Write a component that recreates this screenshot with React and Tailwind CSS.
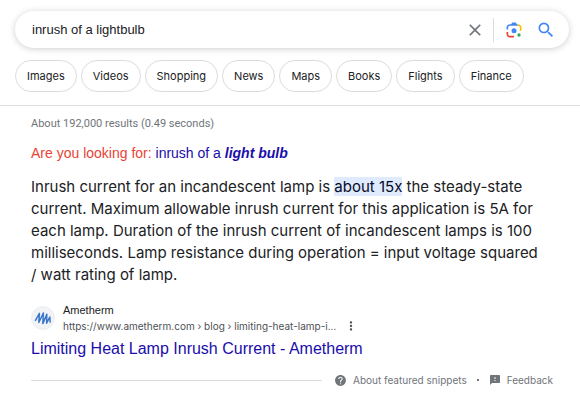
import { useState } from "react";
import { MdClose, MdSearch, MdMoreVert, MdHelp, MdFeedback } from "react-icons/md";

const filters = [
  "Images",
  "Videos",
  "Shopping",
  "News",
  "Maps",
  "Books",
  "Flights",
  "Finance",
];

function LensIcon() {
  return (
    <svg viewBox="0 0 192 192" className="size-5" aria-hidden="true">
      <circle fill="#34a853" cx="144.07" cy="144" r="16" />
      <circle fill="#4285f4" cx="96.07" cy="104" r="24" />
      <path fill="#ea4335" d="M24,135.2c0,18.11,14.69,32.8,32.8,32.8H96v-16l-40.1-0.1c-8.8,0-15.9-8.19-15.9-17.9v-18H24V135.2z" />
      <path fill="#fbbc04" d="M168,72.8c0-18.11-14.69-32.8-32.8-32.8H116l20,16c8.8,0,16,8.29,16,18v30h16V72.8z" />
      <path fill="#4285f4" d="M112,24l-32,0L68,40H56.8C38.69,40,24,54.69,24,72.8V92h16V74c0-9.71,7.2-18,16-18h80L124,40L112,24z" />
    </svg>
  );
}

function AmethermLogo() {
  return (
    <svg viewBox="0 0 24 24" className="size-6 shrink-0" aria-hidden="true">
      <circle cx="12" cy="12" r="11.5" fill="#f1f3f4" stroke="#e4e7ea" strokeWidth="0.6" />
      <path
        d="M4.2 14.8 8.4 7.4 7.8 16.4 12.4 7 11.8 17.6 15.8 8.2 15.6 17.2 18.8 11 19.2 16.6"
        fill="none"
        stroke="#3a76cc"
        strokeWidth="1.5"
        strokeLinejoin="round"
      />
    </svg>
  );
}

export default function App() {
  const [query, setQuery] = useState("inrush of a lightbulb");

  return (
    <div className="min-h-screen bg-white font-['Inter',sans-serif] text-[#202124]">
      {/* Search bar */}
      <header className="border-b border-[#dadce0] pt-[11px] pb-[13px]">
        <form
          onSubmit={(e) => e.preventDefault()}
          className="ml-[15px] mr-[11px] flex h-[37px] items-center rounded-full bg-white pl-[17px] pr-[13px] shadow-[0_1px_6px_rgba(32,33,36,0.22)]"
        >
          <input
            type="text"
            aria-label="Search"
            value={query}
            onChange={(e) => setQuery(e.target.value)}
            className="min-w-0 flex-1 bg-transparent font-['Liberation_Sans',sans-serif] text-[13px] outline-none"
          />
          <button type="button" aria-label="Clear" onClick={() => setQuery("")} className="text-[#70757a]">
            <MdClose className="size-5" />
          </button>
          <span className="ml-2 h-6 w-px bg-[#dadce0]" />
          <button type="button" aria-label="Search by image" className="ml-[10px]">
            <LensIcon />
          </button>
          <button type="submit" aria-label="Submit search" className="ml-3 text-[#4285f4]">
            <MdSearch className="size-5" />
          </button>
        </form>

        {/* Filters */}
        <nav className="mt-3 ml-[15px] flex gap-1">
          {filters.map((name) => (
            <a
              key={name}
              href="#"
              className="flex h-8 items-center rounded-full border border-[#dadce0] px-[11px] text-[11px] whitespace-nowrap"
            >
              {name}
            </a>
          ))}
        </nav>
      </header>

      {/* Results */}
      <main className="px-[31px]">
        <p className="mt-[10px] font-['Roboto',sans-serif] text-[11px] leading-4 text-[#70757a]">
          About 192,000 results (0.49 seconds)
        </p>
        <p className="mt-[11px] font-['Liberation_Sans',sans-serif] text-sm leading-5 text-[#ea4335]">
          Are you looking for:{" "}
          <a href="#" className="text-[#1a0dab]">
            inrush of a <b><i>light bulb</i></b>
          </a>
        </p>

        <p className="mt-[13px] pr-1 text-[15px] leading-[22px]">
          Inrush current for an incandescent lamp is{" "}
          <mark className="bg-[#dfeafd] text-[#040c28]">about 15x</mark> the steady-state
          current. Maximum allowable inrush current for this application is 5A for
          each lamp. Duration of the inrush current of incandescent lamps is 100
          milliseconds. Lamp resistance during operation = input voltage squared
          /&nbsp;watt rating of lamp.
        </p>

        <div className="mt-4 flex items-center gap-2">
          <AmethermLogo />
          <div className="leading-4">
            <p className="font-['Liberation_Sans',sans-serif] text-[11px] leading-4">Ametherm</p>
            <div className="flex items-center gap-2 text-[10px] leading-4 text-[#4d5156]">
              <cite className="not-italic">
                https://www.ametherm.com › blog › limiting-heat-lamp-i...
              </cite>
              <button type="button" aria-label="About this result">
                <MdMoreVert className="size-[14px]" />
              </button>
            </div>
          </div>
        </div>
        <h3 className="mt-[3px] font-['Liberation_Sans',sans-serif] text-base leading-6 text-[#1a0dab]">
          <a href="#">Limiting Heat Lamp Inrush Current - Ametherm</a>
        </h3>

        <footer className="-mr-1 mt-[11px] flex items-center text-[10px] leading-4 text-[#70757a]">
          <span className="mr-3 h-px flex-1 bg-[#dadce0]" />
          <a href="#" className="flex items-center gap-[6px]">
            <MdHelp className="size-[13px]" />
            About featured snippets
          </a>
          <span className="mx-[10px] size-[2px] bg-[#70757a]" />
          <a href="#" className="flex items-center gap-[6px]">
            <MdFeedback className="size-3" />
            Feedback
          </a>
        </footer>
      </main>
    </div>
  );
}
